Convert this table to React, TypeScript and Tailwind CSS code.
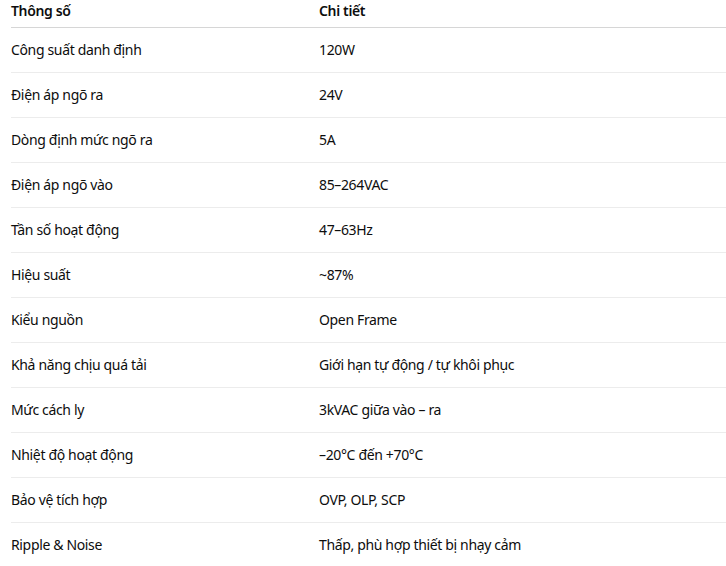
import React from "react";

const rows: [string, string][] = [
  ["Công suất danh định", "120W"],
  ["Điện áp ngõ ra", "24V"],
  ["Dòng định mức ngõ ra", "5A"],
  ["Điện áp ngõ vào", "85–264VAC"],
  ["Tần số hoạt động", "47–63Hz"],
  ["Hiệu suất", "~87%"],
  ["Kiểu nguồn", "Open Frame"],
  ["Khả năng chịu quá tải", "Giới hạn tự động / tự khôi phục"],
  ["Mức cách ly", "3kVAC giữa vào – ra"],
  ["Nhiệt độ hoạt động", "–20°C đến +70°C"],
  ["Bảo vệ tích hợp", "OVP, OLP, SCP"],
  ["Ripple & Noise", "Thấp, phù hợp thiết bị nhạy cảm"],
];

export default function App() {
  return (
    <div className="h-[566px] w-[726px] overflow-hidden bg-white pl-[11px] text-[14px] leading-5 tracking-[-0.35px] text-[#0d0d0d] [font-family:'Noto_Sans',sans-serif]">
      <div className="flex h-[28px] border-b border-[#d6d6d6] pt-px font-semibold">
        <div className="w-[308px]">Thông số</div>
        <div className="flex-1">Chi tiết</div>
      </div>
      {rows.map(([k, v]) => (
        <div key={k} className="flex h-[45px] items-center border-b border-[#ececec]">
          <div className="w-[308px]">{k}</div>
          <div className="flex-1">{v}</div>
        </div>
      ))}
    </div>
  );
}
